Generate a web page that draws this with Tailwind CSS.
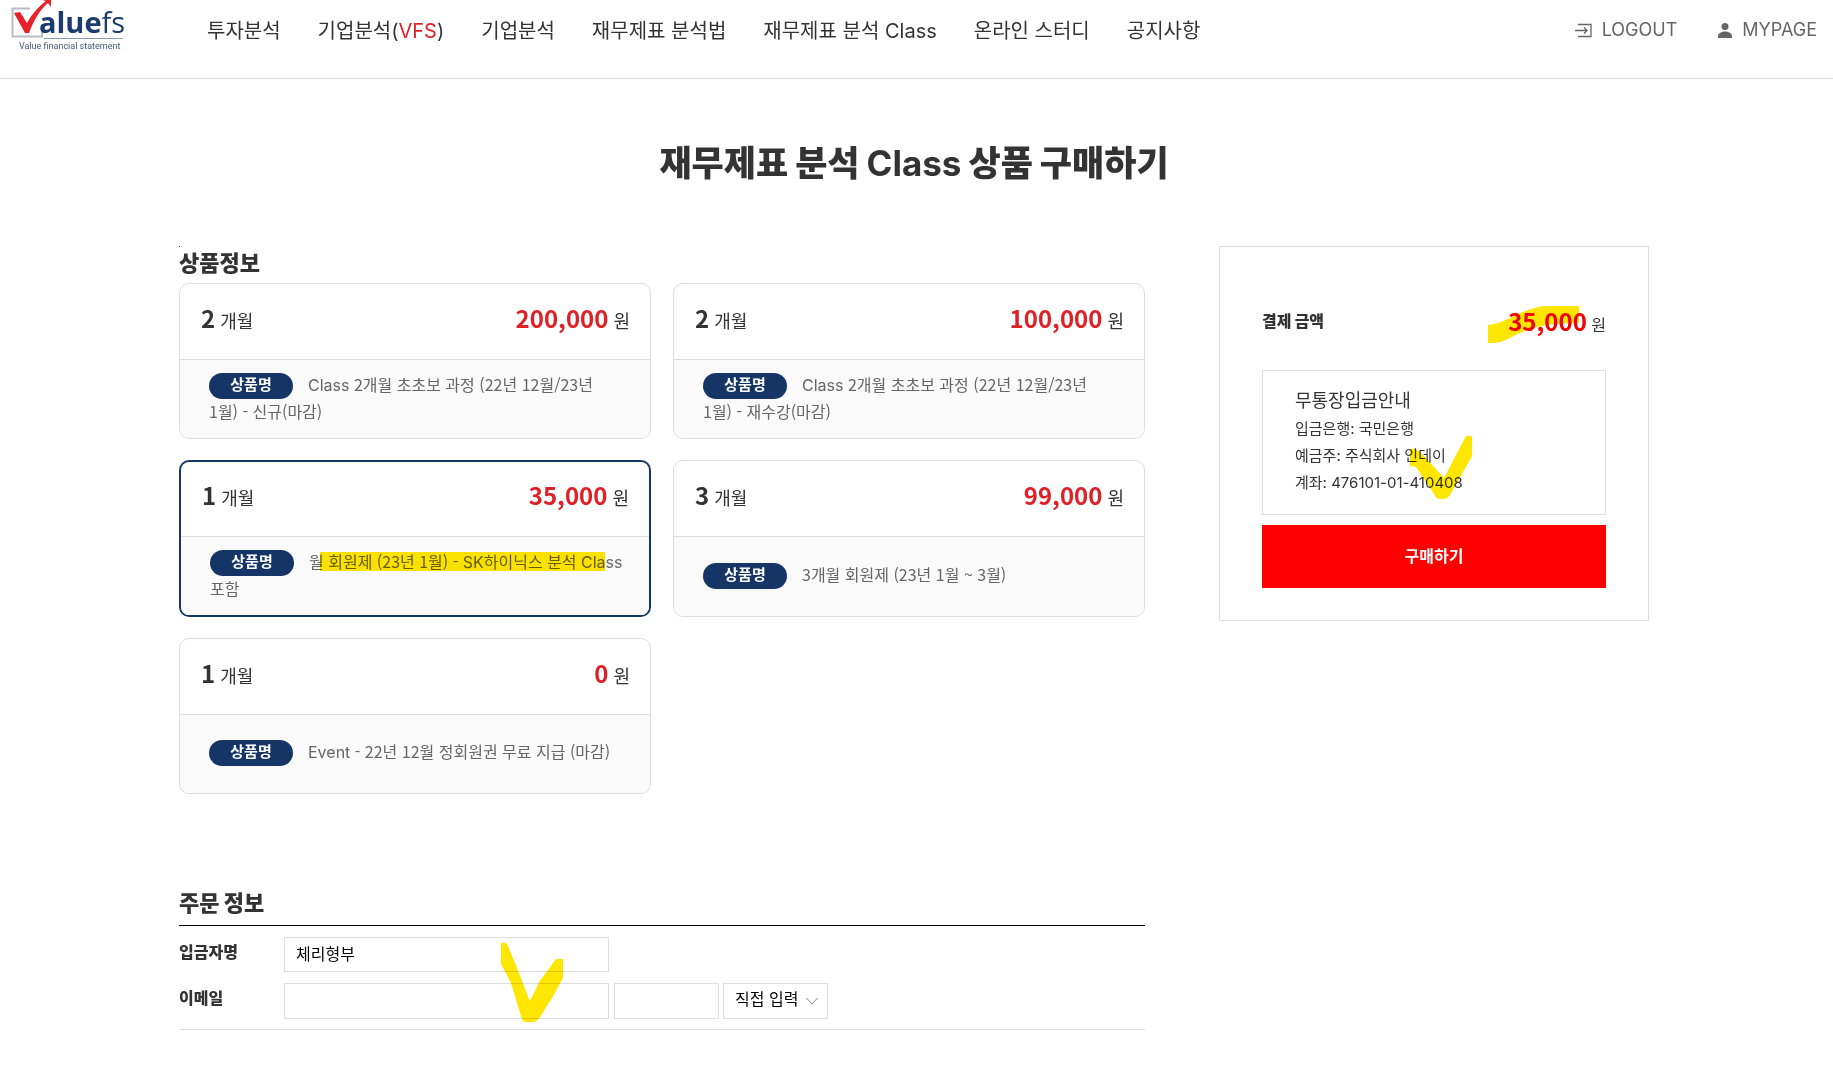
<!DOCTYPE html>
<html lang="ko">
<head>
  <meta charset="UTF-8" />
  <meta name="viewport" content="width=device-width, initial-scale=1" />
  <title>재무제표 분석 Class 상품 구매하기</title>
  <script src="https://cdn.jsdelivr.net/npm/@tailwindcss/browser@4"></script>
</head>
<body class="bg-white text-[#333] font-[Inter,'Noto_Sans_CJK_KR',sans-serif]">
  <header class="flex items-start justify-between border-b border-[#ddd] h-[79px] pl-[11px] pr-4">
    <div class="flex">
      <a href="#" aria-label="Valuefs" class="mr-[83px]">
        <svg width="113" height="54" viewBox="0 0 113 54">
          <path d="M19 8.500H1.500V36.500H31V31" fill="none" stroke="#b9bcc0" stroke-width="2" />
          <path d="M33 38.500H112" stroke="#8e9db5" stroke-width="1" />
          <text x="28" y="33" font-size="29" font-family="Open Sans, sans-serif" fill="#1b3b6f"><tspan font-weight="700">alue</tspan>fs</text>
          <text x="8" y="49" font-size="9" font-family="Roboto, sans-serif" fill="#44597f">Value financial statement</text>
          <path d="M3 13L9 12L16 23C21 14 27 7 35 1L31 0H40V7L37 3C28 11 23 20 18 33H14Z" fill="#e8202a" />
        </svg>
      </a>
      <nav class="flex gap-[37px] text-xl leading-[30px] pt-4 whitespace-nowrap">
        <a href="#">투자분석</a>
        <a href="#">기업분석(<span class="text-[#e01f26]">VFS</span>)</a>
        <a href="#">기업분석</a>
        <a href="#">재무제표 분석법</a>
        <a href="#">재무제표 분석 Class</a>
        <a href="#">온라인 스터디</a>
        <a href="#">공지사항</a>
      </nav>
    </div>
    <div class="flex gap-[41px] pt-[15px] text-lg leading-[30px] text-[#666]">
      <a href="#" class="flex items-center gap-[10px]">
        <svg width="17" height="15" viewBox="0 0 17 15" fill="none" stroke="#666" stroke-width="1.300"><path d="M3 1.500H16V13.500H3M0 7.500H12M9 4.500L12 7.500L9 10.500" /></svg>
        LOGOUT
      </a>
      <a href="#" class="flex items-center gap-[10px]">
        <svg width="14" height="15" viewBox="0 0 14 15" fill="#666"><circle cx="7" cy="3.500" r="3.500" /><path d="M0 15V13C0 10 4 8.500 7 8.500S14 10 14 13V15Z" /></svg>
        MYPAGE
      </a>
    </div>
  </header>

  <main class="mx-auto w-full max-w-[1475px] pr-[5px] pb-10">
    <h1 class="pt-[60px] pb-[59px] text-center text-[35px] leading-[48px] font-black">재무제표 분석 <span class="font-bold">Class</span> 상품 구매하기</h1>

    <div class="flex items-start justify-between">
      <div class="w-[966px]">
        <div class="size-px bg-[#163567]"></div>
        <h2 class="text-[22px] leading-8 font-black pb-1">상품정보</h2>

        <!-- products -->
        <div class="grid grid-cols-2 gap-x-[22px] gap-y-[21px] items-start font-['Noto_Sans_CJK_KR',sans-serif] break-keep">
          <div class="rounded-[10px] border border-[#ddd] overflow-hidden">
            <div class="flex items-center justify-between h-[76px] pb-2 pl-[21px] pr-5 border-b border-[#ddd] text-lg">
              <p><b class="text-2xl">2</b> 개월</p>
              <p><b class="text-2xl text-[#e01f26]">200,000</b> 원</p>
            </div>
            <div class="flex items-center h-[78px] pb-1 pl-[29px] pr-[25px] bg-[#fafafa]">
              <p class="leading-[26px] text-[#666]"><span class="inline-block w-[84px] h-[26px] -my-1 mr-[15px] rounded-full bg-[#163567] text-center text-[15px] leading-[22px] font-bold text-white align-middle">상품명</span><span class="font-['Inter']">Class</span> 2개월 초초보 과정 (22년 12월/23년 1월) - 신규(마감)</p>
            </div>
          </div>

          <div class="rounded-[10px] border border-[#ddd] overflow-hidden">
            <div class="flex items-center justify-between h-[76px] pb-2 pl-[21px] pr-5 border-b border-[#ddd] text-lg">
              <p><b class="text-2xl">2</b> 개월</p>
              <p><b class="text-2xl text-[#e01f26]">100,000</b> 원</p>
            </div>
            <div class="flex items-center h-[78px] pb-1 pl-[29px] pr-[25px] bg-[#fafafa]">
              <p class="leading-[26px] text-[#666]"><span class="inline-block w-[84px] h-[26px] -my-1 mr-[15px] rounded-full bg-[#163567] text-center text-[15px] leading-[22px] font-bold text-white align-middle">상품명</span><span class="font-['Inter']">Class</span> 2개월 초초보 과정 (22년 12월/23년 1월) - 재수강(마감)</p>
            </div>
          </div>

          <!-- selected product -->
          <div class="relative rounded-[10px] border-2 border-[#163567] overflow-hidden">
            <div class="flex items-center justify-between h-[75px] pb-2 pl-[21px] pr-5 border-b border-[#ddd] text-lg">
              <p><b class="text-2xl">1</b> 개월</p>
              <p><b class="text-2xl text-[#e01f26]">35,000</b> 원</p>
            </div>
            <div class="flex items-center h-[78px] pb-1 pl-[29px] pr-[25px] bg-[#fafafa]">
              <p class="leading-[26px] text-[#666]"><span class="inline-block w-[84px] h-[26px] -my-1 mr-[15px] rounded-full bg-[#163567] text-center text-[15px] leading-[22px] font-bold text-white align-middle">상품명</span>월 회원제 (23년 1월) - <span class="font-['Inter']">SK</span>하이닉스 분석 <span class="font-['Inter']">Class</span> 포함</p>
            </div>
            <div class="absolute left-[139px] top-[90px] w-[285px] h-[19px] bg-[#ffe600] mix-blend-multiply"></div>
          </div>

          <div class="rounded-[10px] border border-[#ddd] overflow-hidden">
            <div class="flex items-center justify-between h-[76px] pb-2 pl-[21px] pr-5 border-b border-[#ddd] text-lg">
              <p><b class="text-2xl">3</b> 개월</p>
              <p><b class="text-2xl text-[#e01f26]">99,000</b> 원</p>
            </div>
            <div class="flex items-center h-[79px] pb-1.5 pl-[29px] pr-[25px] bg-[#fafafa]">
              <p class="leading-[26px] text-[#666]"><span class="inline-block w-[84px] h-[26px] -my-1 mr-[15px] rounded-full bg-[#163567] text-center text-[15px] leading-[22px] font-bold text-white align-middle">상품명</span>3개월 회원제 (23년 1월 ~ 3월)</p>
            </div>
          </div>

          <div class="rounded-[10px] border border-[#ddd] overflow-hidden">
            <div class="flex items-center justify-between h-[76px] pb-2 pl-[21px] pr-5 border-b border-[#ddd] text-lg">
              <p><b class="text-2xl">1</b> 개월</p>
              <p><b class="text-2xl text-[#e01f26]">0</b> 원</p>
            </div>
            <div class="flex items-center h-[78px] pb-1.5 pl-[29px] pr-[25px] bg-[#fafafa]">
              <p class="leading-[26px] text-[#666]"><span class="inline-block w-[84px] h-[26px] -my-1 mr-[15px] rounded-full bg-[#163567] text-center text-[15px] leading-[22px] font-bold text-white align-middle">상품명</span><span class="font-['Inter']">Event</span> - 22년 12월 정회원권 무료 지급 (마감)</p>
            </div>
          </div>
        </div>

        <!-- order form -->
        <h2 class="mt-[93px] pb-1.5 text-[22px] leading-8 font-black border-b border-black">주문 정보</h2>
        <form class="relative flex flex-col gap-[11px] pt-[11px] pb-2.5 border-b border-[#ddd]">
          <div class="flex items-center">
            <label for="depositor" class="w-[105px] pb-1.5 font-black leading-6">입금자명</label>
            <input type="text" id="depositor" name="depositor" value="체리형부" class="w-[325px] h-[35px] px-[11px] pb-1 border border-[#ddd] text-black">
          </div>
          <div class="flex items-center">
            <label for="emailId" class="w-[105px] pb-1.5 font-black leading-6">이메일</label>
            <input type="text" id="emailId" name="emailId" class="w-[325px] h-9 px-[11px] pb-1 border border-[#ddd] text-black">
            <input type="text" name="emailDomain" aria-label="이메일 도메인" class="ml-[5px] w-[105px] h-9 px-[11px] pb-1 border border-[#ddd] text-black">
            <div class="relative ml-1">
              <select name="emailSelect" aria-label="이메일 선택" class="block appearance-none w-[105px] h-9 pl-[11px] pb-1 border border-[#ddd] bg-white text-black">
                <option>직접 입력</option>
              </select>
              <svg class="absolute right-[10px] top-[14px] pointer-events-none" width="12" height="8" viewBox="0 0 12 8" fill="none" stroke="#888"><path d="M0.500 1L6 7L11.500 1" /></svg>
            </div>
          </div>
          <svg class="absolute left-[322px] top-[17px] mix-blend-multiply pointer-events-none" width="62" height="79" viewBox="0 0 62 79"><path d="M0 0H5.500L14 20C20 35 25 48 28.500 58C33 51 36 44 38 39L55 16H62V35L51 55L39 74Q36 79 32 79H25Q22 79 21 76L19 70L10 40L0 21Z" fill="#ffe600" /></svg>
        </form>
      </div>

      <!-- payment box -->
      <aside class="w-[430px] border border-[#ddd] px-[42px] pt-[57px] pb-8">
        <div class="relative flex items-center justify-between h-[38px] pb-1">
          <h3 class="font-black">결제 금액</h3>
          <p class="font-['Noto_Sans_CJK_KR',sans-serif]"><b class="text-2xl text-[#f00000]">35,000</b> 원</p>
          <svg class="absolute left-[226px] top-[2px] mix-blend-multiply pointer-events-none" width="91" height="37" viewBox="0 0 91 37"><path d="M0 19C20 17 30 4 56 0H91V17C50 17 35 25 20 33Q10 38 0 37Z" fill="#ffe600" /></svg>
        </div>
        <div class="relative mt-7 border border-[#ddd] px-8 pt-[15px] h-[145px] text-[15px] leading-[27px]">
          <p class="text-lg leading-[29px]">무통장입금안내</p>
          <p>입금은행: 국민은행</p>
          <p>예금주: 주식회사 인데이</p>
          <p>계좌: 476101-01-410408</p>
          <svg class="absolute left-[147px] top-[65px] mix-blend-multiply pointer-events-none" width="62" height="63" viewBox="0 0 62 63"><path d="M0 13H5Q10 15 14 20L34 42L56 0H62V20L40 59Q37 63 33 63H30Q26 63 24 58L6 31L0 30Z" fill="#ffe600" /></svg>
        </div>
        <button type="button" class="mt-[10px] w-full h-[63px] pb-0.5 bg-[#ff0000] font-bold text-white">구매하기</button>
      </aside>
    </div>
  </main>
</body>
</html>
